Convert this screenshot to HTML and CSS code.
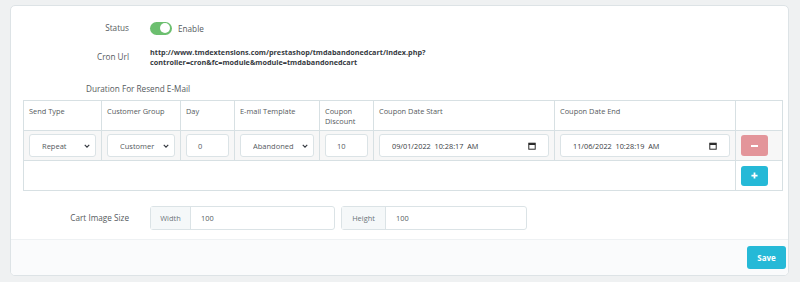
FILE: index.html
```html
<!DOCTYPE html>
<html lang="en">
<head>
<meta charset="utf-8">
<title>Abandoned Cart Settings</title>
<link rel="stylesheet" href="styles.css">
</head>
<body>
<div class="card">
  <div class="card-body">
    <div class="form-row status-row">
      <div class="label">Status</div>
      <div class="control switch-wrap">
        <span class="switch"><span class="knob"></span></span>
        <span class="switch-text">Enable</span>
      </div>
    </div>
    <div class="form-row cron-row">
      <div class="label">Cron Url</div>
      <div class="control cron-url">http://www.tmdextensions.com/prestashop/tmdabandonedcart/index.php?<br>controller=cron&amp;fc=module&amp;module=tmdabandonedcart</div>
    </div>
    <div class="section-title">Duration For Resend E-Mail</div>
    <table class="grid">
      <colgroup>
        <col class="c1"><col class="c2"><col class="c3"><col class="c4"><col class="c5"><col class="c6"><col class="c7"><col class="c8">
      </colgroup>
      <thead>
        <tr>
          <th>Send Type</th>
          <th>Customer Group</th>
          <th>Day</th>
          <th>E-mail Template</th>
          <th>Coupon<br>Discount</th>
          <th>Coupon Date Start</th>
          <th>Coupon Date End</th>
          <th></th>
        </tr>
      </thead>
      <tbody>
        <tr class="data-row">
          <td><div class="select"><span class="sel-text">Repeat</span><svg class="chev" viewBox="0 0 8 5" width="6" height="4"><path d="M1 1l3 3 3-3" fill="none" stroke="#363a41" stroke-width="1.6"/></svg></div></td>
          <td><div class="select"><span class="sel-text">Customer</span><svg class="chev" viewBox="0 0 8 5" width="6" height="4"><path d="M1 1l3 3 3-3" fill="none" stroke="#363a41" stroke-width="1.6"/></svg></div></td>
          <td><div class="input">0</div></td>
          <td><div class="select"><span class="sel-text">Abandoned</span><svg class="chev" viewBox="0 0 8 5" width="6" height="4"><path d="M1 1l3 3 3-3" fill="none" stroke="#363a41" stroke-width="1.6"/></svg></div></td>
          <td><div class="input">10</div></td>
          <td><div class="input date"><span class="date-text">09/01/2022&nbsp; 10:28:17&nbsp; AM</span><svg class="cal" viewBox="0 0 10 10" width="8" height="8"><rect x="1" y="1.5" width="8" height="7.5" fill="none" stroke="#222" stroke-width="1.2"/><rect x="1" y="1.5" width="8" height="2.2" fill="#222"/></svg></div></td>
          <td><div class="input date"><span class="date-text">11/06/2022&nbsp; 10:28:19&nbsp; AM</span><svg class="cal" viewBox="0 0 10 10" width="8" height="8"><rect x="1" y="1.5" width="8" height="7.5" fill="none" stroke="#222" stroke-width="1.2"/><rect x="1" y="1.5" width="8" height="2.2" fill="#222"/></svg></div></td>
          <td><button class="btn btn-minus" type="button"><span class="bar"></span></button></td>
        </tr>
        <tr class="add-row">
          <td colspan="7"></td>
          <td><button class="btn btn-plus" type="button"><svg viewBox="0 0 8 8" width="7" height="7"><path d="M4 0.5v7M0.5 4h7" stroke="#fff" stroke-width="2"/></svg></button></td>
        </tr>
      </tbody>
    </table>
    <div class="form-row size-row">
      <div class="label">Cart Image Size</div>
      <div class="control groups">
        <div class="input-group g-width"><span class="addon">Width</span><span class="group-input">100</span></div>
        <div class="input-group g-height"><span class="addon">Height</span><span class="group-input">100</span></div>
      </div>
    </div>
  </div>
  <div class="card-footer">
    <button class="btn-save" type="button">Save</button>
  </div>
</div>
</body>
</html>
```

FILE: styles.css
```css
html, body {
  margin: 0;
  padding: 0;
}
body {
  background: #eff1f2;
  font-family: "Open Sans", "Noto Sans", sans-serif;
  color: #363a41;
  width: 800px;
  height: 282px;
  overflow: hidden;
}
.card {
  margin: 5px 0 0 10px;
  width: 777px;
  height: 269px;
  background: #fff;
  border: 1px solid #dde3e6;
  border-radius: 5px;
  display: flex;
  flex-direction: column;
  overflow: hidden;
}
.card-body {
  flex: 1;
  padding-top: 15px;
}
.form-row {
  display: grid;
  grid-template-columns: 118px 1fr;
  column-gap: 21px;
  align-items: center;
}
.label {
  text-align: right;
  font-size: 8.2px;
  color: #555a60;
  line-height: 10px;
}
.status-row {
  height: 14px;
}
.switch-wrap {
  display: flex;
  align-items: center;
  gap: 6px;
}
.switch {
  width: 22px;
  height: 13px;
  border-radius: 7px;
  background: #6cbf6f;
  display: flex;
  align-items: center;
  justify-content: flex-end;
  padding-right: 2px;
  box-sizing: border-box;
}
.knob {
  width: 10px;
  height: 10px;
  border-radius: 50%;
  background: #fff;
}
.switch-text {
  font-size: 8.2px;
  color: #555a60;
}
.cron-row {
  margin-top: 12px;
}
.cron-url {
  font-size: 7.25px;
  font-weight: 700;
  line-height: 10px;
  color: #363a41;
}
.section-title {
  margin-top: 17px;
  padding-left: 75px;
  font-size: 8.2px;
  line-height: 10px;
  color: #555a60;
}
.grid {
  margin: 6px 0 0 12px;
  width: 759px;
  table-layout: fixed;
  border-collapse: collapse;
  font-size: 7.4px;
}
.c1 { width: 78px; }
.c2 { width: 79px; }
.c3 { width: 54px; }
.c4 { width: 85px; }
.c5 { width: 54px; }
.c6 { width: 181px; }
.c7 { width: 181px; }
.c8 { width: 47px; }
.grid th, .grid td {
  border: 1px solid #d7e0e3;
}
.grid th {
  height: 30px;
  box-sizing: border-box;
  padding: 5px 5px 4px 5px;
  text-align: left;
  vertical-align: top;
  font-weight: 400;
  line-height: 10px;
  color: #555a60;
}
.grid td {
  padding: 3px 5px;
  vertical-align: middle;
}
.data-row td {
  background: #f7f7f7;
  height: 22px;
}
.add-row td {
  height: 21px;
  padding: 4px 5px 4px 5px;
}
.select, .input {
  height: 23px;
  box-sizing: border-box;
  background: #fff;
  border: 1px solid #dbe3e6;
  border-radius: 3px;
  display: flex;
  align-items: center;
  font-size: 7.5px;
  color: #555a60;
}
.select {
  padding: 0 5px 0 12px;
}
.sel-text {
  flex: 1;
  white-space: nowrap;
  overflow: hidden;
}
.chev {
  flex: none;
}
.input {
  padding: 0 11px;
}
.input.date {
  padding: 0 12px;
  color: #363a41;
}
.date-text {
  flex: 1;
  font-size: 7.3px;
}
.cal {
  flex: none;
}
.btn {
  width: 27px;
  border: 0;
  border-radius: 3px;
  padding: 0;
  display: flex;
  align-items: center;
  justify-content: center;
  cursor: pointer;
}
.btn-minus {
  height: 21px;
  background: #e3959a;
}
.btn-minus .bar {
  width: 7px;
  height: 2px;
  background: #fff;
}
.btn-plus {
  height: 20px;
  background: #25b9d7;
}
.size-row {
  margin-top: 15px;
}
.groups {
  display: flex;
  gap: 6px;
}
.input-group {
  height: 24px;
  box-sizing: border-box;
  border: 1px solid #dbe3e6;
  border-radius: 3px;
  display: flex;
  align-items: stretch;
  font-size: 7.4px;
}
.g-width { width: 185px; }
.g-height { width: 186px; }
.addon {
  background: #f5f8f9;
  border-right: 1px solid #dbe3e6;
  color: #6c7479;
  display: flex;
  align-items: center;
  justify-content: center;
}
.g-width .addon { width: 39px; }
.g-height .addon { width: 43px; }
.group-input {
  flex: 1;
  display: flex;
  align-items: center;
  padding-left: 10px;
  color: #555a60;
}
.card-footer {
  height: 36px;
  box-sizing: border-box;
  background: #fafbfc;
  border-top: 1px solid #eef1f3;
  display: flex;
  justify-content: flex-end;
  align-items: flex-start;
  padding: 6px 2px 0 0;
}
.btn-save {
  width: 39px;
  height: 23px;
  border: 0;
  border-radius: 3px;
  background: #25b9d7;
  color: #fff;
  font-family: "Open Sans", "Noto Sans", sans-serif;
  font-weight: 700;
  font-size: 8px;
  padding: 0;
}
```
